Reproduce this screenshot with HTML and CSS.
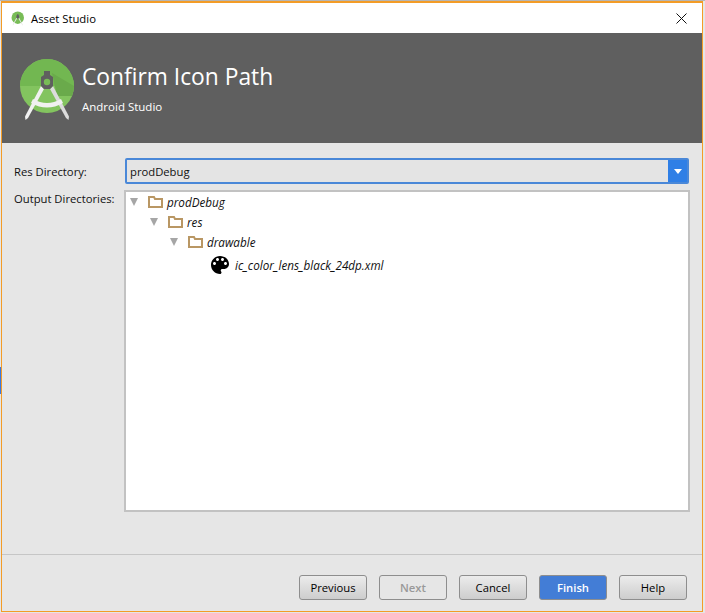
FILE: index.html
```html
<!DOCTYPE html>
<html lang="en">
<head>
  <meta charset="UTF-8">
  <title>Asset Studio</title>
  <link rel="stylesheet" href="styles.css">
</head>
<body>
<div class="edge-top"></div>
<div class="window">
  <div class="titlebar">
    <svg class="title-icon" viewBox="18 55 60 65">
      <circle cx="47" cy="84" r="27" fill="#78bc56"/>
      <path d="M41 84 L44 87 L28 116 L25.5 118 L25 114.5 Z" fill="#e8e8e8"/>
      <path d="M53 84 L50 87 L66 116 L68.5 118 L69 114.5 Z" fill="#e8e8e8"/>
      <path d="M44 69 H50 V73 L53 75 V84 L50 87 H44 L41 84 V75 L44 73 Z" fill="#5f5f5f"/>
    </svg>
    <span class="title-text">Asset Studio</span>
    <svg class="close" viewBox="0 0 11 11"><path d="M0.5 0.5 L10.5 10.5 M10.5 0.5 L0.5 10.5" stroke="#111" stroke-width="1" fill="none"/></svg>
  </div>
  <div class="banner">
    <svg class="logo" viewBox="18 55 60 65">
      <circle cx="47" cy="84" r="27" fill="#83c45f"/>
      <path d="M20 84 A27 27 0 0 1 74 84 Z" fill="#72b751"/>
      <path d="M52 71 L74 84 A27 27 0 0 1 72 94 L57 94 Z" fill="#6aaa4b"/>
      <path d="M41 84 L44 87 L28 116 L25.5 118 L25 114.5 Z" fill="#f1f1f1"/>
      <path d="M53 84 L50 87 L66 116 L68.5 118 L69 114.5 Z" fill="#dcdcdc"/>
      <path d="M33 97 Q47 105 61 97 L63 101 Q47 110 31 101 Z" fill="#f1f1f1"/>
      <path d="M44 69 H50 V73 L53 75 V84 L50 87 H44 L41 84 V75 L44 73 Z" fill="#5f5f5f"/>
      <circle cx="47" cy="80" r="3.2" fill="#78bc56"/>
    </svg>
    <div class="banner-text">
      <div class="banner-title">Confirm Icon Path</div>
      <div class="banner-sub">Android Studio</div>
    </div>
  </div>
  <div class="content">
    <div class="row">
      <div class="label">Res Directory:</div>
      <div class="combo">
        <div class="combo-value">prodDebug</div>
        <div class="combo-btn"><span class="combo-arrow"></span></div>
      </div>
    </div>
    <div class="row row-tree">
      <div class="label">Output Directories:</div>
      <div class="tree">
        <div class="node">
          <span class="arrow"></span>
          <svg class="folder" viewBox="0 0 15 12"><path d="M1 11 V1 H6 L7 3 H14 V11 Z" fill="none" stroke="#b99764" stroke-width="2"/></svg>
          <span>prodDebug</span>
        </div>
        <div class="node lvl1">
          <span class="arrow"></span>
          <svg class="folder" viewBox="0 0 15 12"><path d="M1 11 V1 H6 L7 3 H14 V11 Z" fill="none" stroke="#b99764" stroke-width="2"/></svg>
          <span>res</span>
        </div>
        <div class="node lvl2">
          <span class="arrow"></span>
          <svg class="folder" viewBox="0 0 15 12"><path d="M1 11 V1 H6 L7 3 H14 V11 Z" fill="none" stroke="#b99764" stroke-width="2"/></svg>
          <span>drawable</span>
        </div>
        <div class="node file">
          <svg class="palette" viewBox="0 0 24 24"><path d="M12 3c-4.97 0-9 4.03-9 9s4.03 9 9 9c.83 0 1.5-.67 1.5-1.5 0-.39-.15-.74-.39-1.01-.24-.27-.39-.62-.39-1.01 0-.83.67-1.5 1.5-1.5H16c2.76 0 5-2.24 5-5 0-4.42-4.03-8-9-8zm-5.5 9c-.83 0-1.5-.67-1.5-1.5S5.67 9 6.5 9 8 9.67 8 10.5 7.33 12 6.5 12zm3-4C8.67 8 8 7.33 8 6.5S8.67 5 9.5 5s1.5.67 1.5 1.5S10.33 8 9.5 8zm5 0c-.83 0-1.5-.67-1.5-1.5S13.67 5 14.5 5s1.5.67 1.5 1.5S15.33 8 14.5 8zm3 4c-.83 0-1.5-.67-1.5-1.5S16.67 9 17.5 9s1.5.67 1.5 1.5-.67 1.5-1.5 1.5z"/></svg>
          <span>ic_color_lens_black_24dp.xml</span>
        </div>
      </div>
    </div>
  </div>
  <div class="footer">
    <div class="btn">Previous</div>
    <div class="btn disabled">Next</div>
    <div class="btn">Cancel</div>
    <div class="btn primary">Finish</div>
    <div class="btn">Help</div>
  </div>
</div>
<div class="side-mark"></div>
</body>
</html>
```

FILE: styles.css
```css
* {
  padding: 0;
  margin: 0;
  box-sizing: border-box;
}

html, body {
  width: 705px;
  height: 613px;
  overflow: hidden;
  background: #e6e6e6;
}

body {
  padding: 1px 2px 1px 1px;
  font-family: "Open Sans", "Liberation Sans", sans-serif;
  font-size: 11.25px;
  color: #111;
}

.edge-top {
  position: absolute;
  left: 0;
  top: 0;
  width: 705px;
  height: 1px;
  background: #b5b5b5;
}

.window {
  width: 702px;
  height: 611px;
  border: 1px solid #f39c27;
  border-top-width: 2px;
  background: #e6e6e6;
  display: flex;
  flex-direction: column;
}

.titlebar {
  height: 30px;
  flex: none;
  background: #fff;
  display: flex;
  align-items: center;
  padding: 0 15px 0 9px;
}

.title-icon {
  width: 14px;
  height: 15px;
  margin-right: 6px;
}

.title-text {
  flex: 1;
  font-size: 11.3px;
  color: #000;
}

.close {
  width: 11px;
  height: 11px;
}

.banner {
  height: 110px;
  flex: none;
  background: #5f5f5f;
  color: #fff;
  display: flex;
  align-items: center;
  padding: 0 0 0 16px;
}

.logo {
  width: 60px;
  height: 65px;
  margin-right: 4px;
  margin-top: 2px;
}

.banner-title {
  font-size: 22.8px;
  line-height: 30px;
}

.banner-sub {
  font-size: 11.5px;
  line-height: 16px;
  margin-top: 7px;
}

.content {
  flex: 1;
  padding: 15px 12px 0 12px;
}

.row {
  display: flex;
}

.row-tree {
  margin-top: 5px;
}

.label {
  width: 110px;
  flex: none;
  line-height: 27px;
}

.row-tree .label {
  line-height: 18px;
}

.combo {
  margin-left: 1px;
  width: 564px;
  height: 26px;
  display: flex;
  border: 2px solid #4a88d8;
  border-radius: 2px;
  background: #e4e4e4;
}

.combo-value {
  flex: 1;
  line-height: 23px;
  padding-left: 3px;
}

.combo-btn {
  width: 19px;
  background: #2f7fe6;
  display: flex;
  align-items: center;
  justify-content: center;
}

.combo-arrow {
  border-left: 4px solid transparent;
  border-right: 4px solid transparent;
  border-top: 5px solid #fff;
}

.tree {
  width: 566px;
  height: 322px;
  border: 2px solid #c2c2c2;
  background: #fff;
  font-style: italic;
  font-size: 11.7px;
}

.node {
  height: 20px;
  display: flex;
  align-items: center;
  padding-left: 4px;
}

.lvl1 {
  padding-left: 24px;
}

.lvl2 {
  padding-left: 44px;
}

.file {
  height: 26px;
  padding-left: 82px;
}

.arrow {
  border-left: 4.5px solid transparent;
  border-right: 4.5px solid transparent;
  border-top: 8px solid #a6a6a6;
  margin-right: 10px;
}

.folder {
  width: 15px;
  height: 12px;
  margin-right: 4px;
}

.palette {
  width: 24px;
  height: 24px;
  margin-right: 3px;
}

.footer {
  height: 57px;
  flex: none;
  border-top: 1px solid #c6c6c6;
  display: flex;
  justify-content: flex-end;
  gap: 12px;
  padding: 20px 15px 0 0;
}

.btn {
  width: 68px;
  height: 25px;
  border: 1px solid #8e8e8e;
  border-radius: 3px;
  background: linear-gradient(#ececec, #cdcdcd);
  text-align: center;
  line-height: 23px;
  color: #000;
}

.btn.disabled {
  background: #e6e6e6;
  color: #999;
  font-weight: 600;
}

.btn.primary {
  background: #437dd6;
  color: #fff;
  font-weight: 600;
}

.side-mark {
  position: absolute;
  left: 0;
  top: 367px;
  width: 1px;
  height: 27px;
  background: #3b78e0;
}
```
